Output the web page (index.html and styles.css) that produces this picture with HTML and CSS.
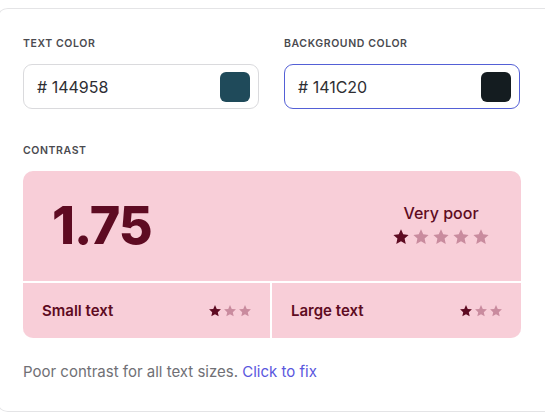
FILE: index.html
```html
<!DOCTYPE html>
<html lang="en">
<head>
  <meta charset="UTF-8" />
  <meta name="viewport" content="width=device-width, initial-scale=1.0" />
  <title>Contrast checker</title>
  <link rel="stylesheet" href="styles.css">
</head>
<body>
  <svg width="0" height="0" class="defs">
    <defs>
      <path id="star" d="M12 1.8l3 6.6 7.2.8-5.4 4.9 1.5 7.1L12 17.6l-6.3 3.6 1.5-7.1L1.8 9.2 9 8.4z" />
    </defs>
  </svg>

  <div class="card">
    <div class="fields">
      <div class="field">
        <label class="label">Text color</label>
        <div class="color-input">
          <span class="hex"># 144958</span>
          <span class="swatch" style="background: #1f4a5a;"></span>
        </div>
      </div>
      <div class="field">
        <label class="label">Background color</label>
        <div class="color-input active">
          <span class="hex"># 141C20</span>
          <span class="swatch" style="background: #141c20;"></span>
        </div>
      </div>
    </div>

    <div class="label section-label">Contrast</div>

    <div class="result">
      <div class="result-main">
        <div class="ratio">1.75</div>
        <div class="rating">
          <div class="rating-text">Very poor</div>
          <div class="stars big">
            <svg class="on" viewBox="0 0 24 24"><use href="#star" /></svg>
            <svg viewBox="0 0 24 24"><use href="#star" /></svg>
            <svg viewBox="0 0 24 24"><use href="#star" /></svg>
            <svg viewBox="0 0 24 24"><use href="#star" /></svg>
            <svg viewBox="0 0 24 24"><use href="#star" /></svg>
          </div>
        </div>
      </div>
      <div class="result-sizes">
        <div class="size">
          <span>Small text</span>
          <div class="stars small">
            <svg class="on" viewBox="0 0 24 24"><use href="#star" /></svg>
            <svg viewBox="0 0 24 24"><use href="#star" /></svg>
            <svg viewBox="0 0 24 24"><use href="#star" /></svg>
          </div>
        </div>
        <div class="size">
          <span>Large text</span>
          <div class="stars small">
            <svg class="on" viewBox="0 0 24 24"><use href="#star" /></svg>
            <svg viewBox="0 0 24 24"><use href="#star" /></svg>
            <svg viewBox="0 0 24 24"><use href="#star" /></svg>
          </div>
        </div>
      </div>
    </div>

    <p class="note">Poor contrast for all text sizes. <a href="#">Click to fix</a></p>
  </div>
</body>
</html>
```

FILE: styles.css
```css
body {
  margin: 0;
  background: #fff;
  font-family: Inter, "Noto Sans", sans-serif;
  color: #333;
  overflow: hidden;
}
.defs {
  position: absolute;
}
.card {
  margin: 8px 0 0 -4px;
  width: 498px;
  border: 1px solid #e4e4e6;
  border-right: none;
  border-radius: 12px 0 0 12px;
  padding: 27px 24px 29px 26px;
}
.fields {
  display: grid;
  grid-template-columns: 236px 236px;
  gap: 25px;
}
.label {
  display: block;
  font-size: 10.5px;
  font-weight: 600;
  letter-spacing: 0.6px;
  text-transform: uppercase;
  color: #4a4a4f;
  line-height: 16px;
}
.color-input {
  margin-top: 12px;
  height: 45px;
  box-sizing: border-box;
  border: 1px solid #dadadd;
  border-radius: 9px;
  display: flex;
  align-items: center;
  justify-content: space-between;
  padding: 0 8px 0 13px;
}
.color-input.active {
  border-color: #5460d6;
}
.hex {
  font-size: 16px;
  color: #2e2e33;
}
.swatch {
  width: 30px;
  height: 30px;
  border-radius: 6px;
}
.section-label {
  margin-top: 34px;
}
.result {
  margin-top: 12px;
  background: #f8ced8;
  border-radius: 10px;
  overflow: hidden;
  color: #5e0b22;
}
.result-main {
  height: 110px;
  display: flex;
  align-items: center;
  justify-content: space-between;
  padding: 0 31px 0 29px;
  border-bottom: 2px solid #fff;
}
.ratio {
  font-size: 52px;
  font-weight: 800;
  letter-spacing: -1px;
  margin-top: -2px;
}
.rating {
  display: flex;
  flex-direction: column;
  align-items: center;
  margin-top: -3px;
}
.rating-text {
  font-size: 16px;
  font-weight: 500;
  margin-bottom: 5px;
}
.stars {
  display: flex;
}
.stars svg {
  fill: #c98b9e;
}
.stars svg.on {
  fill: #5e0b22;
}
.stars.big {
  gap: 2px;
}
.stars.big svg {
  width: 18px;
  height: 18px;
}
.result-sizes {
  display: grid;
  grid-template-columns: 247px 1fr;
  gap: 2px;
  background: #fff;
}
.size {
  background: #f8ced8;
  height: 55px;
  display: flex;
  align-items: center;
  justify-content: space-between;
  padding: 0 18px 0 19px;
  font-size: 15px;
  font-weight: 600;
}
.stars.small {
  gap: 1px;
}
.stars.small svg {
  width: 14px;
  height: 14px;
}
.note {
  margin: 24px 0 0;
  font-size: 15px;
  line-height: 20px;
  color: #707075;
}
.note a {
  color: #5a57de;
  text-decoration: none;
}
```
